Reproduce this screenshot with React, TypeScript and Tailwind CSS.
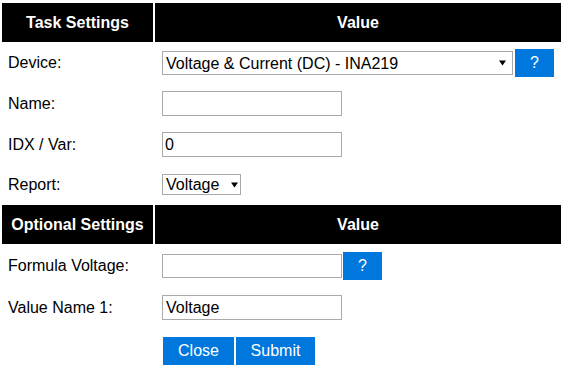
import React from "react";

const font = { fontFamily: '"Liberation Sans", Arial, sans-serif' };

function Header({ left, right }: { left: string; right: string }) {
  return (
    <div className="flex h-[39px] gap-[2px] text-[16px] font-bold text-white">
      <div className="flex w-[151px] items-center justify-center bg-black">{left}</div>
      <div className="flex w-[406px] items-center justify-center bg-black">{right}</div>
    </div>
  );
}

function Row({ label, h, children }: { label?: string; h: string; children: React.ReactNode }) {
  return (
    <div className={`flex gap-[2px] ${h}`}>
      <div className="flex w-[151px] items-center pl-[6px] text-[16px] text-black">{label}</div>
      <div className="flex w-[406px] items-center pl-[7px]">{children}</div>
    </div>
  );
}

// dropdown arrow drawn over the select
function Arrow({ right }: { right: string }) {
  return (
    <span className={`pointer-events-none absolute top-0 flex h-full items-center ${right}`}>
      <svg width="7" height="6" viewBox="0 0 7 6">
        <path d="M0 0.5 H7 L3.5 5.5 Z" fill="#000" />
      </svg>
    </span>
  );
}

function HelpButton() {
  return (
    <button className="flex h-[28px] w-[39px] items-center justify-center bg-[#0077dd] text-[16px] text-white">
      ?
    </button>
  );
}

export default function App() {
  return (
    <div className="min-h-[367px] bg-white pl-[2px] pt-[3px]" style={font}>
      <div className="flex flex-col gap-[2px]">
        <Header left="Task Settings" right="Value" />

        <Row label="Device:" h="h-[38px]">
          <div className="relative">
            <select
              defaultValue="ina219"
              className="h-[24px] w-[351px] appearance-none border border-[#a9a9a9] bg-white pl-[3px] text-[16px] text-black outline-none"
            >
              <option value="ina219">Voltage &amp; Current (DC) - INA219</option>
            </select>
            <Arrow right="right-[7px]" />
          </div>
          <div className="ml-[2px]">
            <HelpButton />
          </div>
        </Row>

        <Row label="Name:" h="h-[39px]">
          <input className="h-[25px] w-[180px] border border-[#a9a9a9] bg-white px-[3px] text-[16px] outline-none" />
        </Row>

        <Row label="IDX / Var:" h="h-[39px]">
          <input
            defaultValue="0"
            className="h-[25px] w-[180px] border border-[#a9a9a9] bg-white px-[2px] text-[16px] text-black outline-none"
          />
        </Row>

        <Row label="Report:" h="h-[37px]">
          <div className="relative">
            <select
              defaultValue="v"
              className="h-[21px] w-[79px] appearance-none border border-[#a9a9a9] bg-white pl-[3px] text-[16px] leading-[19px] text-black outline-none"
            >
              <option value="v">Voltage</option>
            </select>
            <Arrow right="right-[3px]" />
          </div>
        </Row>

        <Header left="Optional Settings" right="Value" />

        <Row label="Formula Voltage:" h="h-[40px]">
          <input className="h-[24px] w-[180px] border border-[#a9a9a9] bg-white px-[3px] text-[16px] outline-none" />
          <div className="ml-px">
            <HelpButton />
          </div>
        </Row>

        <Row label="Value Name 1:" h="h-[39px]">
          <input
            defaultValue="Voltage"
            className="h-[25px] w-[180px] border border-[#a9a9a9] bg-white px-[3px] text-[16px] text-black outline-none"
          />
        </Row>

        <div className="flex gap-[2px] pl-[161px] pt-[8px]">
          <button className="h-[28px] w-[71px] bg-[#0077dd] text-[16px] text-white">Close</button>
          <button className="h-[28px] w-[79px] bg-[#0077dd] text-[16px] text-white">Submit</button>
        </div>
      </div>
    </div>
  );
}
